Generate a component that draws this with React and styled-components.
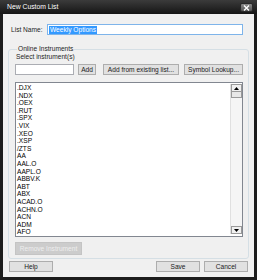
import React from "react";
import styled, { createGlobalStyle } from "styled-components";

const GlobalStyle = createGlobalStyle`
  html, body {
    margin: 0;
    padding: 0;
    background: #ffffff;
  }
  body {
    font-family: "Liberation Sans", Arial, sans-serif;
    font-size: 6.6px;
    color: #000;
  }
`;

//Instruments shown in the list
const instruments = [
  ".DJX", ".NDX", ".OEX", ".RUT", ".SPX", ".VIX", ".XEO", ".XSP", "/ZTS",
  "AA", "AAL.O", "AAPL.O", "ABBV.K", "ABT", "ABX", "ACAD.O", "ACHN.O",
  "ACN", "ADM", "AFO",
];

const App = () => {
  return (
    <>
      <GlobalStyle />
      <Window>
        <TitleBar>
          <Title>New Custom List</Title>
          <CloseButton>
            <svg width="7" height="6" viewBox="0 0 7 6">
              <path d="M1 0.5 L6 5.5 M6 0.5 L1 5.5" stroke="#ffffff" strokeWidth="1.4" />
            </svg>
          </CloseButton>
        </TitleBar>
        <Body>
          <NameRow>
            <Label>List Name:</Label>
            <NameInput>
              <Selected>Weekly Options</Selected>
            </NameInput>
          </NameRow>
          <Group>
            <Legend>Online Instruments</Legend>
            <SubLabel>Select instrument(s)</SubLabel>
            <InputRow>
              <SymbolInput />
              <Button $w={18} $ml={4}>Add</Button>
              <Button $w={76} $ml={7}>Add from existing list...</Button>
              <Button $w={59} $ml={5}>Symbol Lookup...</Button>
            </InputRow>
            <ListBox>
              <Items>
                {instruments.map((name) => (
                  <Item key={name}>{name}</Item>
                ))}
              </Items>
              <ScrollBar>
                <Arrow>
                  <svg width="5" height="3" viewBox="0 0 5 3">
                    <path d="M0 3 L2.5 0 L5 3 Z" fill="#000" />
                  </svg>
                </Arrow>
                <Thumb />
                <Track />
                <Arrow>
                  <svg width="5" height="3" viewBox="0 0 5 3">
                    <path d="M0 0 L2.5 3 L5 0 Z" fill="#000" />
                  </svg>
                </Arrow>
              </ScrollBar>
            </ListBox>
            <DisabledButton>Remove Instrument</DisabledButton>
          </Group>
          <Footer>
            <Button $w={44} $ml={1}>Help</Button>
            <Spacer />
            <Button $w={44}>Save</Button>
            <Button $w={44} $ml={4}>Cancel</Button>
          </Footer>
        </Body>
      </Window>
    </>
  );
};

const Window = styled.div`
  width: 257px;
  height: 280px;
  box-sizing: border-box;
  background: #1c1c1c;
  padding: 0 3px 3px 3px;
  display: flex;
  flex-direction: column;
`;

const TitleBar = styled.div`
  height: 14px;
  flex-shrink: 0;
  display: flex;
  align-items: center;
  justify-content: space-between;
  padding: 0 0 0 4px;
  background: linear-gradient(#3b3b3b, #151515);
  margin: 0 -3px;
  padding-left: 7px;
  padding-right: 4px;
  box-sizing: border-box;
`;

const Title = styled.span`
  color: #ffffff;
  font-size: 6.8px;
  line-height: 14px;
`;

const CloseButton = styled.div`
  width: 13px;
  height: 9px;
  margin-top: 1px;
  border-radius: 2px;
  background: linear-gradient(#8a8a8a, #555555);
  border: 1px solid #2a2a2a;
  box-sizing: border-box;
  display: flex;
  align-items: center;
  justify-content: center;
`;

const Body = styled.div`
  flex: 1;
  background: #f0f0f0;
  padding: 10px 5px 0 5px;
  display: flex;
  flex-direction: column;
`;

const NameRow = styled.div`
  display: flex;
  align-items: center;
  height: 11px;
  padding-left: 3px;
`;

const Label = styled.span`
  width: 36px;
  color: #1e1e1e;
`;

const NameInput = styled.div`
  width: 196px;
  height: 11px;
  box-sizing: border-box;
  border: 1px solid #7eb4ea;
  background: #fff;
  display: flex;
  align-items: center;
  padding-left: 1px;
`;

const Selected = styled.span`
  background: #3399ff;
  color: #fff;
  line-height: 8px;
  padding: 0 1px;
`;

const Group = styled.fieldset`
  margin: 10px 0 0 0;
  padding: 0 5px 3px 6px;
  border: 1px solid #d5dfe5;
  border-radius: 3px;
  min-width: 0;
`;

const Legend = styled.legend`
  padding: 0 1px;
  margin-left: 2px;
  line-height: 8px;
  color: #1e1e1e;
`;

const SubLabel = styled.div`
  line-height: 8px;
  padding-left: 1px;
  color: #1e1e1e;
`;

const InputRow = styled.div`
  display: flex;
  align-items: center;
  margin-top: 3px;
`;

const SymbolInput = styled.div`
  width: 59px;
  height: 11px;
  box-sizing: border-box;
  border: 1px solid #abadb3;
  background: #fff;
`;

const Button = styled.div`
  width: ${(p) => p.$w}px;
  margin-left: ${(p) => p.$ml || 0}px;
  height: 11px;
  box-sizing: border-box;
  border: 1px solid #adadad;
  background: #e1e1e1;
  display: flex;
  align-items: center;
  justify-content: center;
  white-space: nowrap;
  color: #1a1a1a;
`;

const ListBox = styled.div`
  margin-top: 7px;
  height: 155px;
  box-sizing: border-box;
  border: 1px solid #828790;
  background: #fff;
  display: flex;
`;

const Items = styled.div`
  flex: 1;
  overflow: hidden;
  padding: 1px 0 0 1px;
`;

const Item = styled.div`
  line-height: 7.6px;
  height: 7.6px;
  white-space: nowrap;
`;

const ScrollBar = styled.div`
  width: 11px;
  margin: 1px 0 2px 0;
  display: flex;
  flex-direction: column;
  border-left: 1px solid #e0e0e0;
  background: #f5f5f5;
`;

const Arrow = styled.div`
  height: 8px;
  box-sizing: border-box;
  border: 1px solid #9a9a9a;
  background: #f0f0f0;
  display: flex;
  align-items: center;
  justify-content: center;
`;

const Thumb = styled.div`
  height: 6px;
  box-sizing: border-box;
  border: 1px solid #9a9a9a;
  border-top: none;
  background: #e8e8e8;
`;

const Track = styled.div`
  flex: 1;
`;

const DisabledButton = styled.div`
  margin-top: 5px;
  width: 67px;
  height: 13px;
  box-sizing: border-box;
  border: 1px solid #c4c4c4;
  background: #cccccc;
  color: #eeeeee;
  display: flex;
  align-items: center;
  justify-content: center;
  white-space: nowrap;
`;

const Footer = styled.div`
  display: flex;
  margin-top: 2px;
  padding-right: 1px;
`;

const Spacer = styled.div`
  flex: 1;
`;

export default App;
